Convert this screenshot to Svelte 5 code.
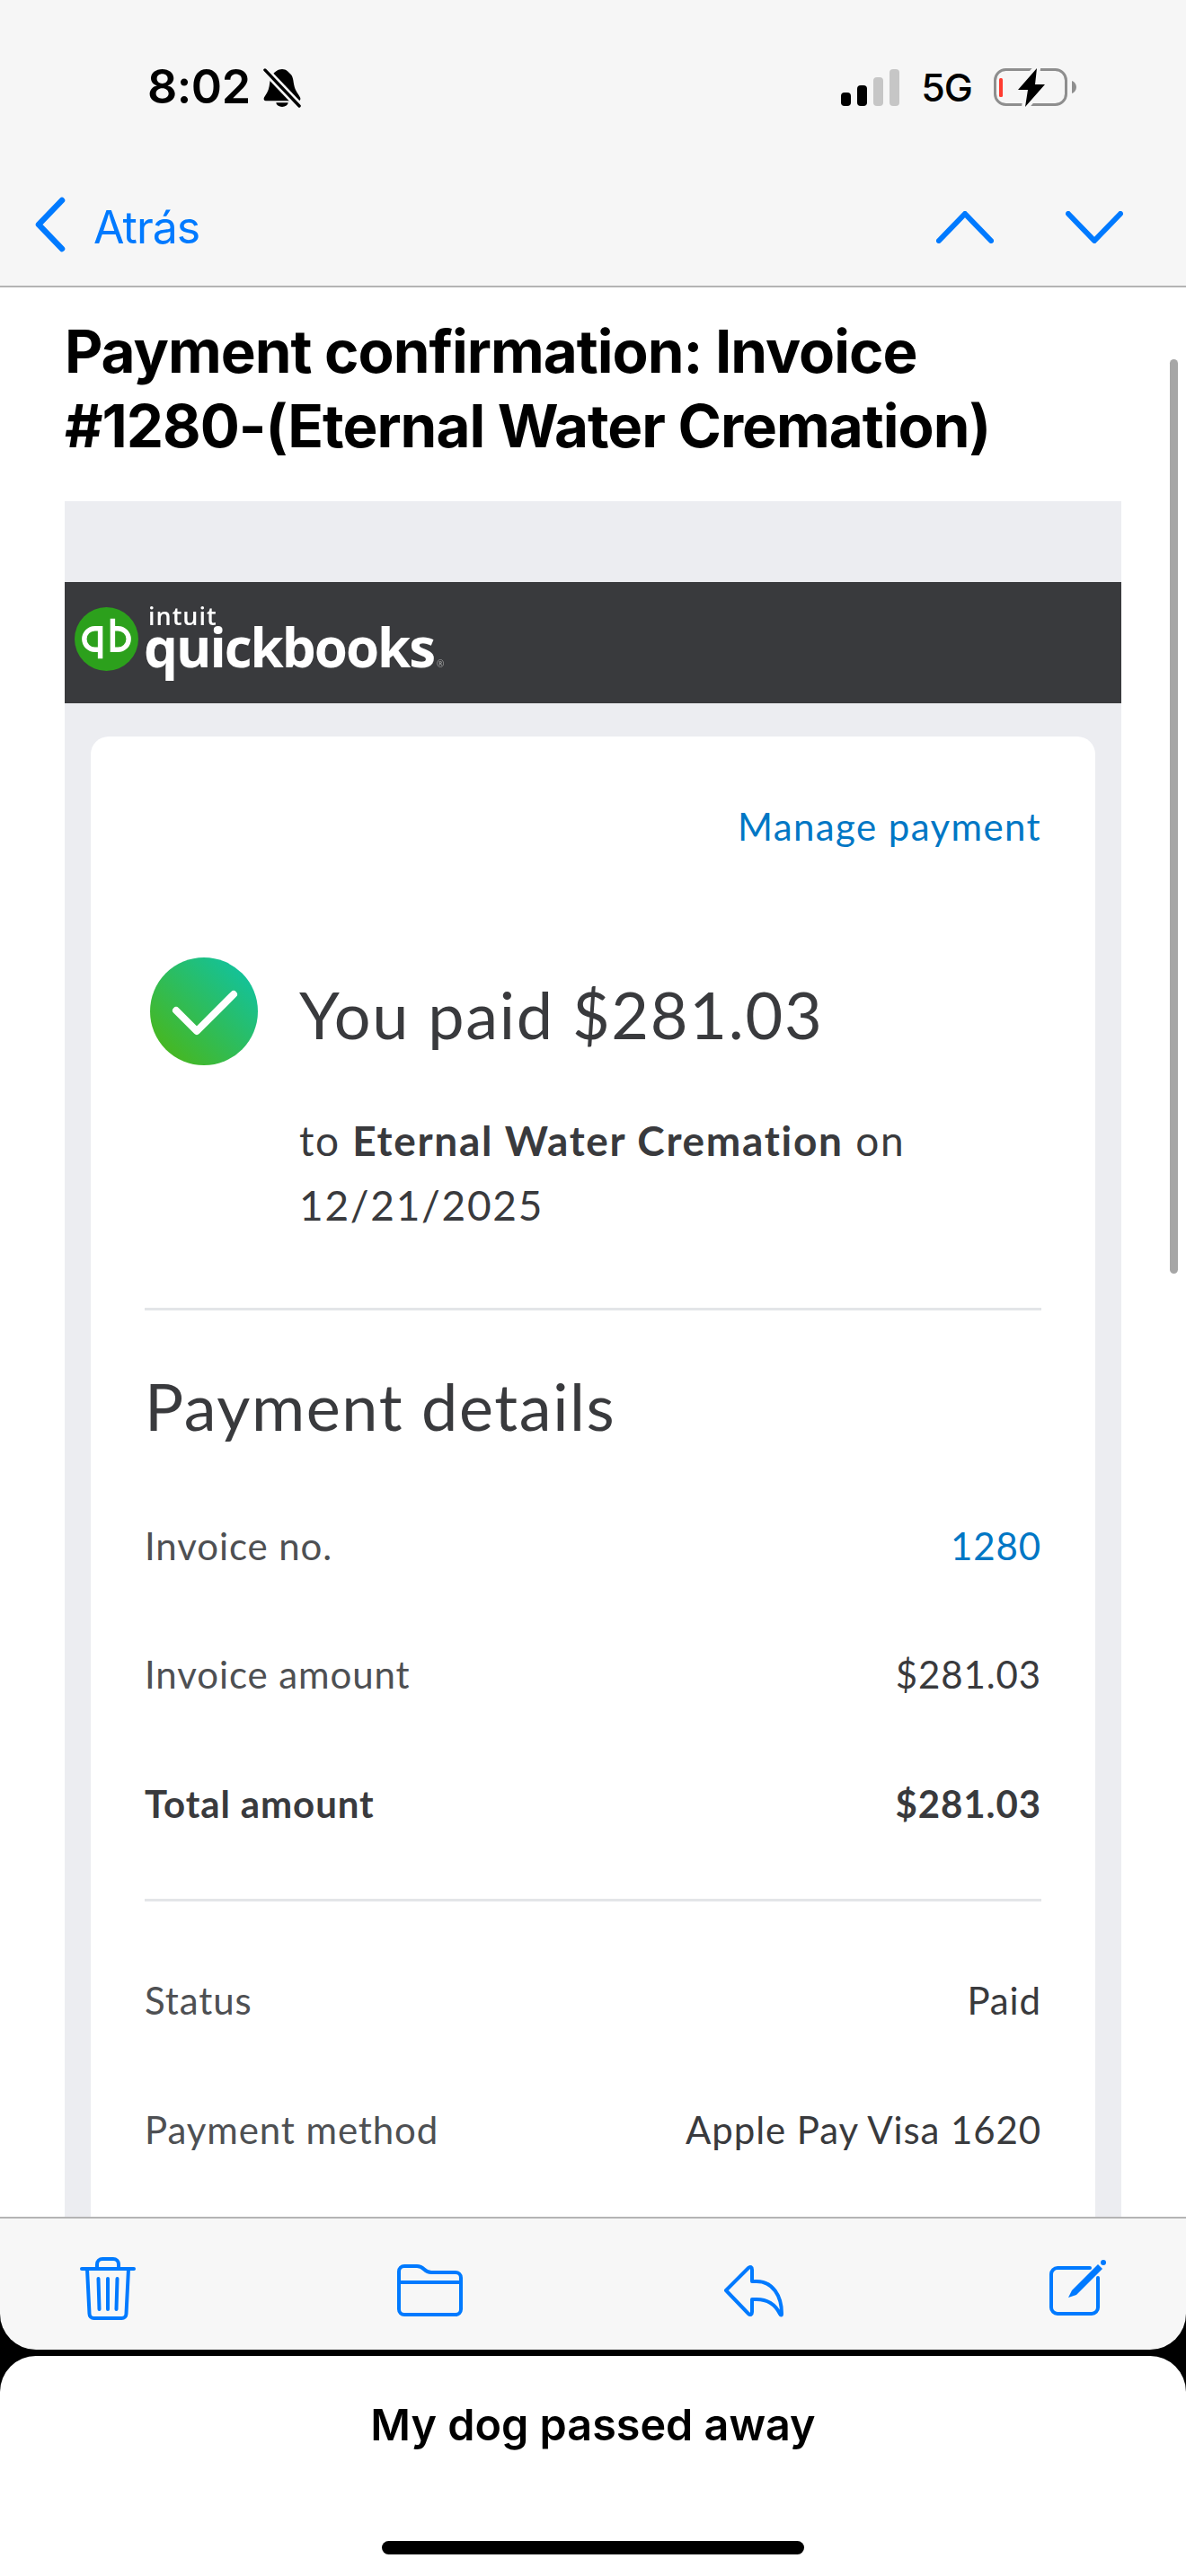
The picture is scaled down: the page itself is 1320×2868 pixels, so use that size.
<script lang="ts">
	const amountRows = [
		{ label: 'Invoice no.', value: '1280', link: true },
		{ label: 'Invoice amount', value: '$281.03' },
		{ label: 'Total amount', value: '$281.03', strong: true }
	];

	const statusRows = [
		{ label: 'Status', value: 'Paid' },
		{ label: 'Payment method', value: 'Apple Pay Visa 1620' }
	];
</script>

<div class="screen">
	<header class="top">
		<div class="status">
			<div class="clock">
				<span class="time">8:02</span>
				<svg class="bell" viewBox="0 0 44 46" width="42" height="46">
					<path
						d="M22 2c5 0 7 3 9 5 4 3 4 9 5 14 1 6 5 10 7 14 1 2 0 4-2 4H3c-2 0-3-2-2-4 2-3 5-7 6-13 1-6 1-11 5-15 2-2 5-5 10-5z"
						fill="#000"
					/>
					<path d="M15 41a7 5 0 0 0 14 0z" fill="#000" />
					<path d="M2 3l40 42" stroke="#f6f6f6" stroke-width="9" />
					<path d="M2 3l40 42" stroke="#000" stroke-width="3.5" stroke-linecap="round" />
				</svg>
			</div>
			<div class="indicators">
				<svg viewBox="0 0 65 41" width="65" height="41">
					<rect x="0" y="26" width="11" height="15" rx="4" fill="#000" />
					<rect x="18" y="18" width="11" height="23" rx="4" fill="#000" />
					<rect x="36" y="9" width="11" height="32" rx="4" fill="#c6c6c6" />
					<rect x="54" y="0" width="11" height="41" rx="4" fill="#c6c6c6" />
				</svg>
				<span class="network">5G</span>
				<svg viewBox="0 0 92 48" width="92" height="48">
					<rect x="1.5" y="4.5" width="79" height="39" rx="12" fill="none" stroke="#8e8e8e" stroke-width="3" />
					<rect x="6" y="14" width="4" height="21" rx="1.5" fill="#ff3b30" />
					<path d="M87 17c3 1 5 4 5 7s-2 6-5 7z" fill="#8e8e8e" />
					<path
						d="M48 3L27 27h11l-3 19 22-25H46z"
						fill="#000"
						stroke="#f6f6f6"
						stroke-width="8"
						stroke-linejoin="round"
						paint-order="stroke"
					/>
				</svg>
			</div>
		</div>
		<nav class="nav">
			<div class="back">
				<svg viewBox="0 0 36 62" width="36" height="62">
					<path d="M31 4L5 31l26 27" fill="none" stroke="#007aff" stroke-width="6.5" stroke-linecap="round" stroke-linejoin="round" />
				</svg>
				<span>Atrás</span>
			</div>
			<div class="arrows">
				<svg viewBox="0 0 64 36" width="64" height="36">
					<path d="M3 33L32 3l29 30" fill="none" stroke="#007aff" stroke-width="6" stroke-linecap="round" stroke-linejoin="round" />
				</svg>
				<svg viewBox="0 0 64 36" width="64" height="36">
					<path d="M3 3l29 30L61 3" fill="none" stroke="#007aff" stroke-width="6" stroke-linecap="round" stroke-linejoin="round" />
				</svg>
			</div>
		</nav>
	</header>

	<main class="message">
		<div class="scrollbar"></div>
		<h1>Payment confirmation: Invoice<br />#1280-(Eternal Water Cremation)</h1>

		<div class="email">
			<div class="brand">
				<svg class="qb" viewBox="0 0 72 72" width="71" height="71">
					<circle cx="36" cy="36" r="36" fill="#2ca01c" />
					<path d="M29 48h-6a12 12 0 0 1 0-24h6v34" fill="none" stroke="#fff" stroke-width="5.5" />
					<path d="M43 24h6a12 12 0 0 1 0 24h-6V13" fill="none" stroke="#fff" stroke-width="5.5" />
				</svg>
				<div class="wordmark">
					<span class="intuit">intuit</span>
					<span class="quickbooks">quickbooks<small>®</small></span>
				</div>
			</div>

			<section class="card">
				<div class="manage"><span class="link">Manage payment</span></div>

				<div class="hero">
					<svg viewBox="0 0 120 120" width="120" height="120">
						<defs>
							<linearGradient id="paid" x1="0" y1="1" x2="1" y2="0">
								<stop offset="0.12" stop-color="#47b71f" />
								<stop offset="0.88" stop-color="#13c29b" />
							</linearGradient>
						</defs>
						<circle cx="60" cy="60" r="60" fill="url(#paid)" />
						<path d="M29 59l23 23 41-41" fill="none" stroke="#fff" stroke-width="8" stroke-linecap="round" stroke-linejoin="round" />
					</svg>
					<div class="paid">You paid $281.03</div>
				</div>

				<p class="payee">to <b>Eternal Water Cremation</b> on<br />12/21/2025</p>

				<hr />

				<h2>Payment details</h2>

				<div class="rows">
					{#each amountRows as row}
						<div class="row" class:strong={row.strong}>
							<span class="key">{row.label}</span>
							<span class:link={row.link}>{row.value}</span>
						</div>
					{/each}
				</div>

				<hr class="second" />

				<div class="rows status-rows">
					{#each statusRows as row}
						<div class="row">
							<span class="key">{row.label}</span>
							<span>{row.value}</span>
						</div>
					{/each}
				</div>
			</section>
		</div>
	</main>

	<footer class="toolbar">
		<svg viewBox="0 0 64 72" width="64" height="72" class="tool">
			<path d="M3 14h58" />
			<path d="M20 13V9a6 6 0 0 1 6-6h12a6 6 0 0 1 6 6v4" />
			<path d="M9 14l2.5 50a5 5 0 0 0 5 5h31a5 5 0 0 0 5-5L55 14" />
			<path d="M21.500 25l1 34M32 25v34M42.500 25l-1 34" />
		</svg>
		<svg viewBox="0 0 75 72" width="75" height="72" class="tool">
			<path d="M3 29V17a6 6 0 0 1 6-6h14c4 0 6 1.500 8 3.500s4 3.500 8 3.500h27a6 6 0 0 1 6 6v35a6 6 0 0 1-6 6H9a6 6 0 0 1-6-6z" />
			<path d="M3 29h69" />
		</svg>
		<svg viewBox="0 0 72 72" width="72" height="72" class="tool reply">
			<path d="M4 38L29 13c2-2 4-1 4 2v13h5c18 0 28 16 28 36 0 2-1 2-2 0-5-10-14-16-26-16h-5v14c0 3-2 4-4 2z" />
		</svg>
		<svg viewBox="0 0 66 72" width="66" height="72" class="tool">
			<path d="M46 13H10a7 7 0 0 0-7 7v37a7 7 0 0 0 7 7h38a7 7 0 0 0 7-7V24" />
			<path class="pen" d="M22 46l4-8L55 9l5 5-29 29z" />
			<circle class="pen" cx="61" cy="7" r="3" />
		</svg>
	</footer>

	<div class="sheet">
		<div class="sheet-title">My dog passed away</div>
		<div class="home-bar"></div>
	</div>
</div>

<style>
	:global(body) {
		margin: 0;
		background: #000;
	}

	.screen {
		width: 1320px;
		height: 2868px;
		display: flex;
		flex-direction: column;
		overflow: hidden;
		background: #000;
		font-family: 'Lato', 'Open Sans', sans-serif;
		color: #393a3d;
	}

	/* top chrome */
	.top {
		height: 318px;
		flex: none;
		background: #f6f6f6;
		border-bottom: 2px solid #b4b4b4;
		font-family: 'Inter', sans-serif;
	}

	.status {
		display: flex;
		justify-content: space-between;
		align-items: center;
		height: 50px;
		padding: 72px 122px 0 164px;
	}

	.clock,
	.indicators {
		display: flex;
		align-items: center;
	}

	.time {
		font-size: 52px;
		font-weight: 600;
		color: #000;
		letter-spacing: -0.5px;
		line-height: 50px;
	}

	.bell {
		margin-left: 14px;
	}

	.network {
		font-size: 43px;
		font-weight: 500;
		color: #000;
		margin: 0 24px;
		letter-spacing: -1px;
		line-height: 50px;
	}

	.nav {
		display: flex;
		justify-content: space-between;
		align-items: center;
		height: 70px;
		margin-top: 93px;
		padding: 0 70px 0 38px;
	}

	.back {
		display: flex;
		align-items: center;
		gap: 30px;
		color: #007aff;
		font-size: 50px;
		letter-spacing: -1px;
	}

	.back span {
		margin-top: 5px;
	}

	.arrows {
		display: flex;
		gap: 80px;
		margin-top: 6px;
	}

	/* scrolling message */
	.message {
		position: relative;
		flex: 1;
		min-height: 0;
		overflow: hidden;
		background: #fff;
		padding: 30px 72px 0;
	}

	.scrollbar {
		position: absolute;
		top: 80px;
		left: 1302px;
		width: 9px;
		height: 1018px;
		border-radius: 5px;
		background: #a6a6a6;
	}

	h1 {
		margin: 0 0 42px;
		font-family: 'Inter', sans-serif;
		font-size: 65.5px;
		line-height: 83px;
		font-weight: 700;
		color: #000;
		letter-spacing: -1px;
	}

	.email {
		background: #ecedf1;
		padding: 90px 0 0;
	}

	.brand {
		height: 135px;
		display: flex;
		align-items: flex-start;
		background: #393a3d;
		padding-left: 11px;
		box-sizing: border-box;
	}

	.qb {
		margin-top: 28px;
		flex: none;
	}

	.wordmark {
		display: flex;
		flex-direction: column;
		margin: 28px 0 0 6px;
		color: #fff;
		filter: blur(0.5px);
		font-family: 'Open Sans', sans-serif;
	}

	.intuit {
		font-size: 27px;
		line-height: 20px;
		font-weight: 600;
		margin-left: 5px;
		letter-spacing: 1px;
	}

	.quickbooks {
		font-size: 60px;
		line-height: 48px;
		font-weight: 700;
		letter-spacing: -2px;
	}

	.quickbooks small {
		font-size: 10px;
		font-weight: 400;
		color: #aaa;
		margin-left: 3px;
		letter-spacing: 0;
	}

	.card {
		margin: 37px 29px 0;
		padding: 72px 60px 60px;
		background: #fff;
		border-radius: 20px 20px 0 0;
	}

	.manage {
		text-align: right;
		font-size: 42px;
		line-height: 56px;
		letter-spacing: 1.4px;
	}

	.link {
		color: #0077c5;
	}

	.hero {
		display: flex;
		align-items: flex-start;
		gap: 46px;
		margin-top: 118px;
		padding-left: 6px;
	}

	.paid {
		font-size: 72px;
		line-height: 120px;
		margin-top: 3px;
		white-space: nowrap;
		letter-spacing: 1.7px;
	}

	.payee {
		margin: 45px 0 0;
		padding-left: 172px;
		font-size: 46px;
		line-height: 72px;
		letter-spacing: 1.7px;
	}

	.payee b {
		font-weight: 700;
	}

	hr {
		height: 3px;
		margin: 78px 0 0;
		border: none;
		background: #e3e5e8;
	}

	h2 {
		margin: 66px 0 44px;
		font-size: 72px;
		line-height: 80px;
		font-weight: 400;
		letter-spacing: 1.6px;
	}

	.row {
		display: flex;
		justify-content: space-between;
		align-items: center;
		height: 143.5px;
		font-size: 42px;
		letter-spacing: 0.9px;
	}

	.key {
		color: #4e5053;
	}

	.strong,
	.strong .key {
		font-weight: 700;
		color: #393a3d;
	}

	hr.second {
		margin-top: 34px;
	}

	.status-rows {
		margin-top: 39px;
	}

	/* bottom toolbar */
	.toolbar {
		height: 146px;
		flex: none;
		display: flex;
		justify-content: space-between;
		align-items: flex-start;
		box-sizing: content-box;
		padding: 0 87px 0 88px;
		background: #f7f7f7;
		border-top: 2px solid #b4b4b4;
		border-radius: 0 0 40px 40px;
	}

	.tool {
		margin-top: 42px;
		fill: none;
		stroke: #007aff;
		stroke-width: 4;
		stroke-linecap: round;
		stroke-linejoin: round;
	}

	.tool.reply {
		margin-left: -2px;
		margin-right: 2px;
	}

	.tool .pen {
		fill: #007aff;
		stroke: none;
	}

	.sheet {
		height: 245px;
		flex: none;
		margin-top: 7px;
		box-sizing: border-box;
		padding-top: 49px;
		background: #fff;
		border-radius: 40px 40px 0 0;
		display: flex;
		flex-direction: column;
		align-items: center;
	}

	.sheet-title {
		font-family: 'Inter', sans-serif;
		font-size: 48.5px;
		line-height: 56px;
		font-weight: 600;
		color: #000;
	}

	.home-bar {
		width: 470px;
		height: 15px;
		margin-top: 101px;
		border-radius: 8px;
		background: #000;
	}
</style>
